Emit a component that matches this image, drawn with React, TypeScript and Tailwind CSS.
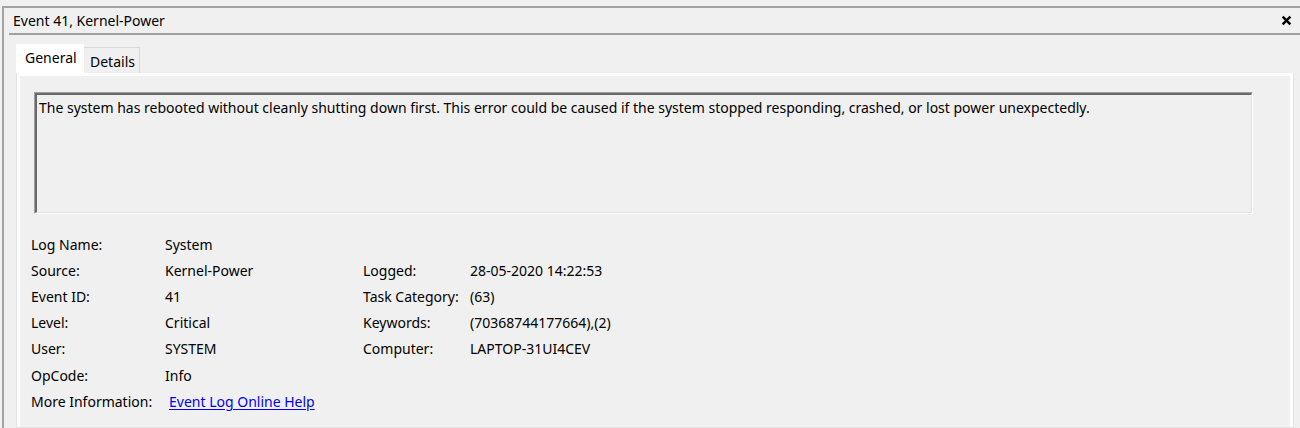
import React from 'react';

const font = { fontFamily: '"Noto Sans", "Open Sans", sans-serif' };

const rows: [string, React.ReactNode, string?, string?][] = [
  ['Log Name:', 'System'],
  ['Source:', 'Kernel-Power', 'Logged:', '28-05-2020 14:22:53'],
  ['Event ID:', '41', 'Task Category:', '(63)'],
  ['Level:', 'Critical', 'Keywords:', '(70368744177664),(2)'],
  ['User:', 'SYSTEM', 'Computer:', 'LAPTOP-31UI4CEV'],
  ['OpCode:', 'Info'],
];

const App: React.FC = () => {
  return (
    <div className="w-[1300px] h-[428px] bg-[#f0f0f0] pt-[6px] overflow-hidden text-[14px] text-black" style={font}>
      <div className="ml-[2px] h-full border-t-2 border-l-2 border-[#a3a3a3] flex flex-col">
        {/* title bar */}
        <div className="h-[25px] flex items-center justify-between pl-[9px] pr-[8px]">
          <span className="text-[14px]">Event 41, Kernel-Power</span>
          <svg className="w-[11px] h-[11px]" viewBox="0 0 10 10">
            <path d="M1.5 1.5 L8.5 8.5 M8.5 1.5 L1.5 8.5" stroke="#000" strokeWidth={2.2} />
          </svg>
        </div>
        <div className="ml-[5px] border-t-2 border-[#a0a0a0]"></div>

        {/* tabs */}
        <div className="ml-[12px] mt-[9px] flex items-end">
          <div className="w-[68px] h-[29px] bg-white pl-[9px] pt-[3px]">General</div>
          <div className="w-[56px] h-[26px] border-t border-r border-[#d9d9d9] pl-[6px] pt-[3px]">Details</div>
        </div>

        {/* panel */}
        <div className="ml-[12px] w-[1278px] flex-1 bg-white border border-t-0 border-[#e3e3e3] px-[3px] pt-[3px]">
          <div className="h-full bg-[#f0f0f0] pl-[11px] pt-[16px]">
            <div className="ml-[3px] w-[1219px] h-[122px] border-t border-l border-[#a0a0a0] border-b border-r border-b-white border-r-white">
              <div className="h-full border-t-2 border-l-2 border-[#696969] border-b border-r border-b-[#e3e3e3] border-r-[#e3e3e3] pl-[2px] pt-[2px]">
                The system has rebooted without cleanly shutting down first. This error could be caused if the system stopped responding, crashed, or lost power unexpectedly.
              </div>
            </div>

            <div className="mt-[17px] grid grid-cols-[134px_198px_107px_1fr] auto-rows-[26.2px] items-center">
              {rows.map(([l1, v1, l2, v2]) => (
                <React.Fragment key={l1}>
                  <div>{l1}</div>
                  <div>{v1}</div>
                  <div>{l2 ?? ''}</div>
                  <div>{v2 ?? ''}</div>
                </React.Fragment>
              ))}
              <div>More Information:</div>
              <div className="pl-[4px]">
                <span className="text-[#0000ee] underline underline-offset-2">Event Log Online Help</span>
              </div>
            </div>
          </div>
        </div>
      </div>
    </div>
  );
};

export default App;
